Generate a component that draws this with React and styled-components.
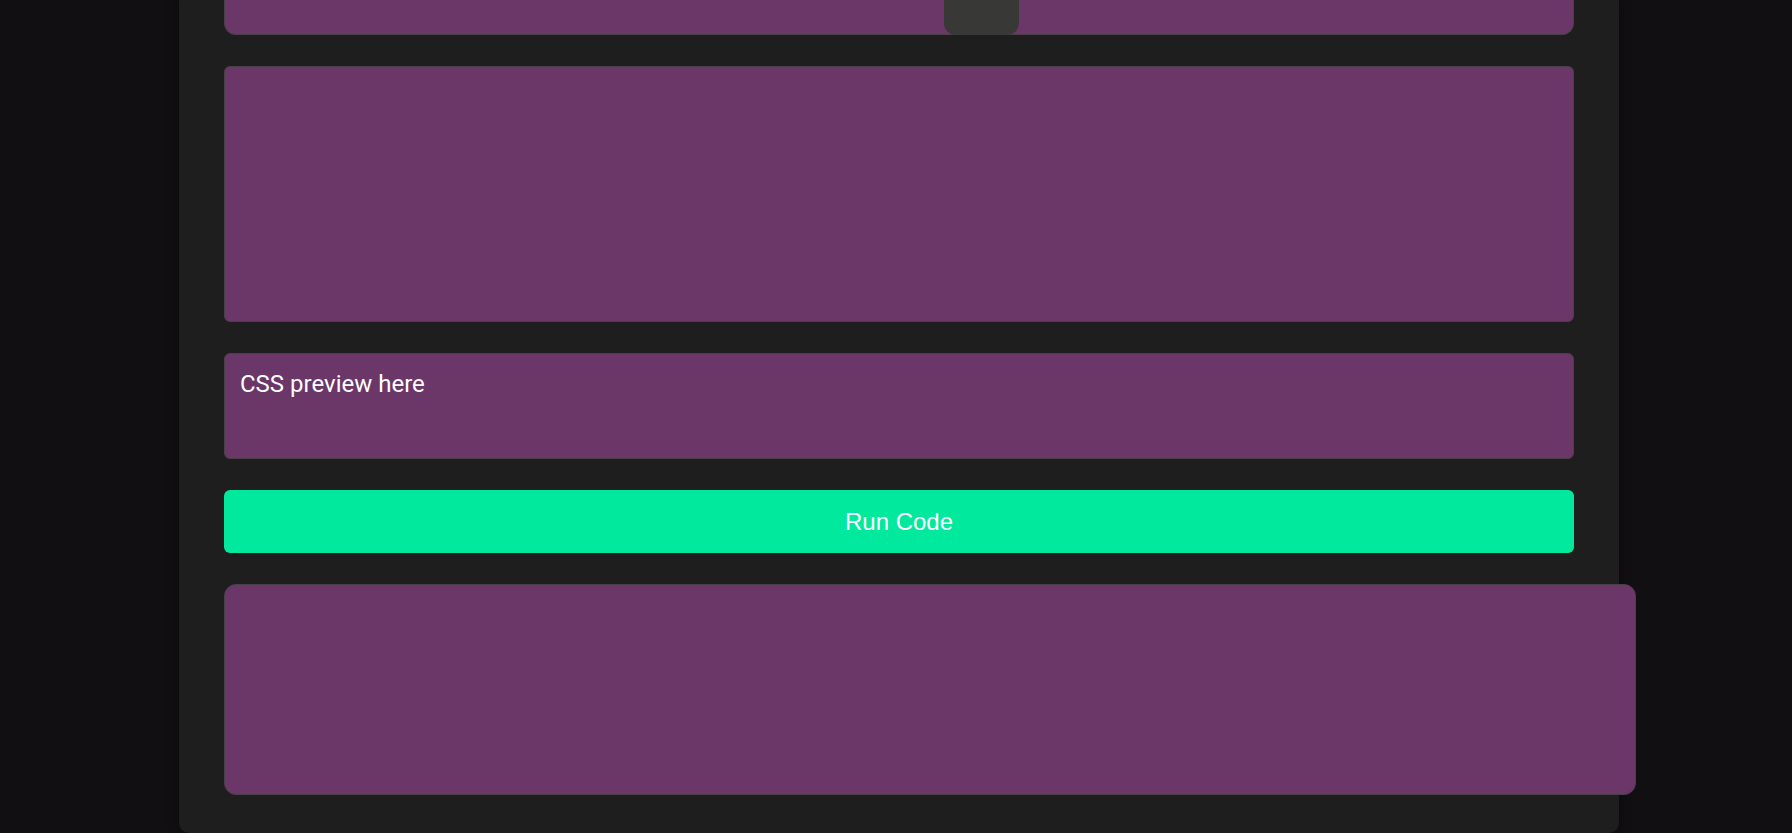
import React from "react";
import styled, { createGlobalStyle } from "styled-components";

const GlobalStyle = createGlobalStyle`
    html, body {
        margin: 0;
        padding: 0;
        background-color: #120f12;
        height: 100%;
        overflow: hidden;
    }
`;

export default function App() {
    return (
        <>
            <GlobalStyle />
            <Page>
                <Panel>
                    <EditorStub>
                        <Handle />
                    </EditorStub>
                    <Editor $height={256} />
                    <Preview>CSS preview here</Preview>
                    <RunButton type="button">Run Code</RunButton>
                    <Output />
                </Panel>
            </Page>
        </>
    );
}

const Page = styled.div`
    height: 833px;
    display: flex;
    padding-left: 179px;
`;

const Panel = styled.div`
    width: 1440px;
    box-sizing: border-box;
    padding: 0 45px 38px 45px;
    background-color: #1e1e1e;
    border-radius: 0 0 10px 10px;
    box-shadow: 0 0 12px rgba(0, 0, 0, 0.45);
    display: flex;
    flex-direction: column;
    gap: 31px;

    & > * {
        flex-shrink: 0;
    }
`;

const Box = styled.div`
    background-color: #6b3668;
    box-sizing: border-box;
    border: 1px solid #4a4048;
    color: #ffffff;
`;

const EditorStub = styled(Box)`
    position: relative;
    height: 35px;
    border-top: none;
    border-radius: 0 0 12px 12px;
`;

const Handle = styled.div`
    position: absolute;
    left: 719px;
    bottom: -1px;
    width: 75px;
    height: 36px;
    background-color: #383836;
    border-radius: 0 0 12px 12px;
`;

const Editor = styled(Box)`
    height: ${(p) => p.$height}px;
    border-radius: 6px;
`;

const Preview = styled(Box)`
    height: 106px;
    border-radius: 6px;
    padding: 16px 15px;
    font-family: Roboto, "Noto Sans", sans-serif;
    font-size: 24px;
    line-height: 28px;
`;

const RunButton = styled.button`
    height: 63px;
    border: none;
    border-radius: 6px;
    background-color: #00e99c;
    color: #ffffff;
    font-family: "Liberation Sans", Arial, sans-serif;
    font-size: 24px;
    cursor: pointer;
`;

const Output = styled(Box)`
    width: 1412px;
    height: 211px;
    border-radius: 12px;
`;
